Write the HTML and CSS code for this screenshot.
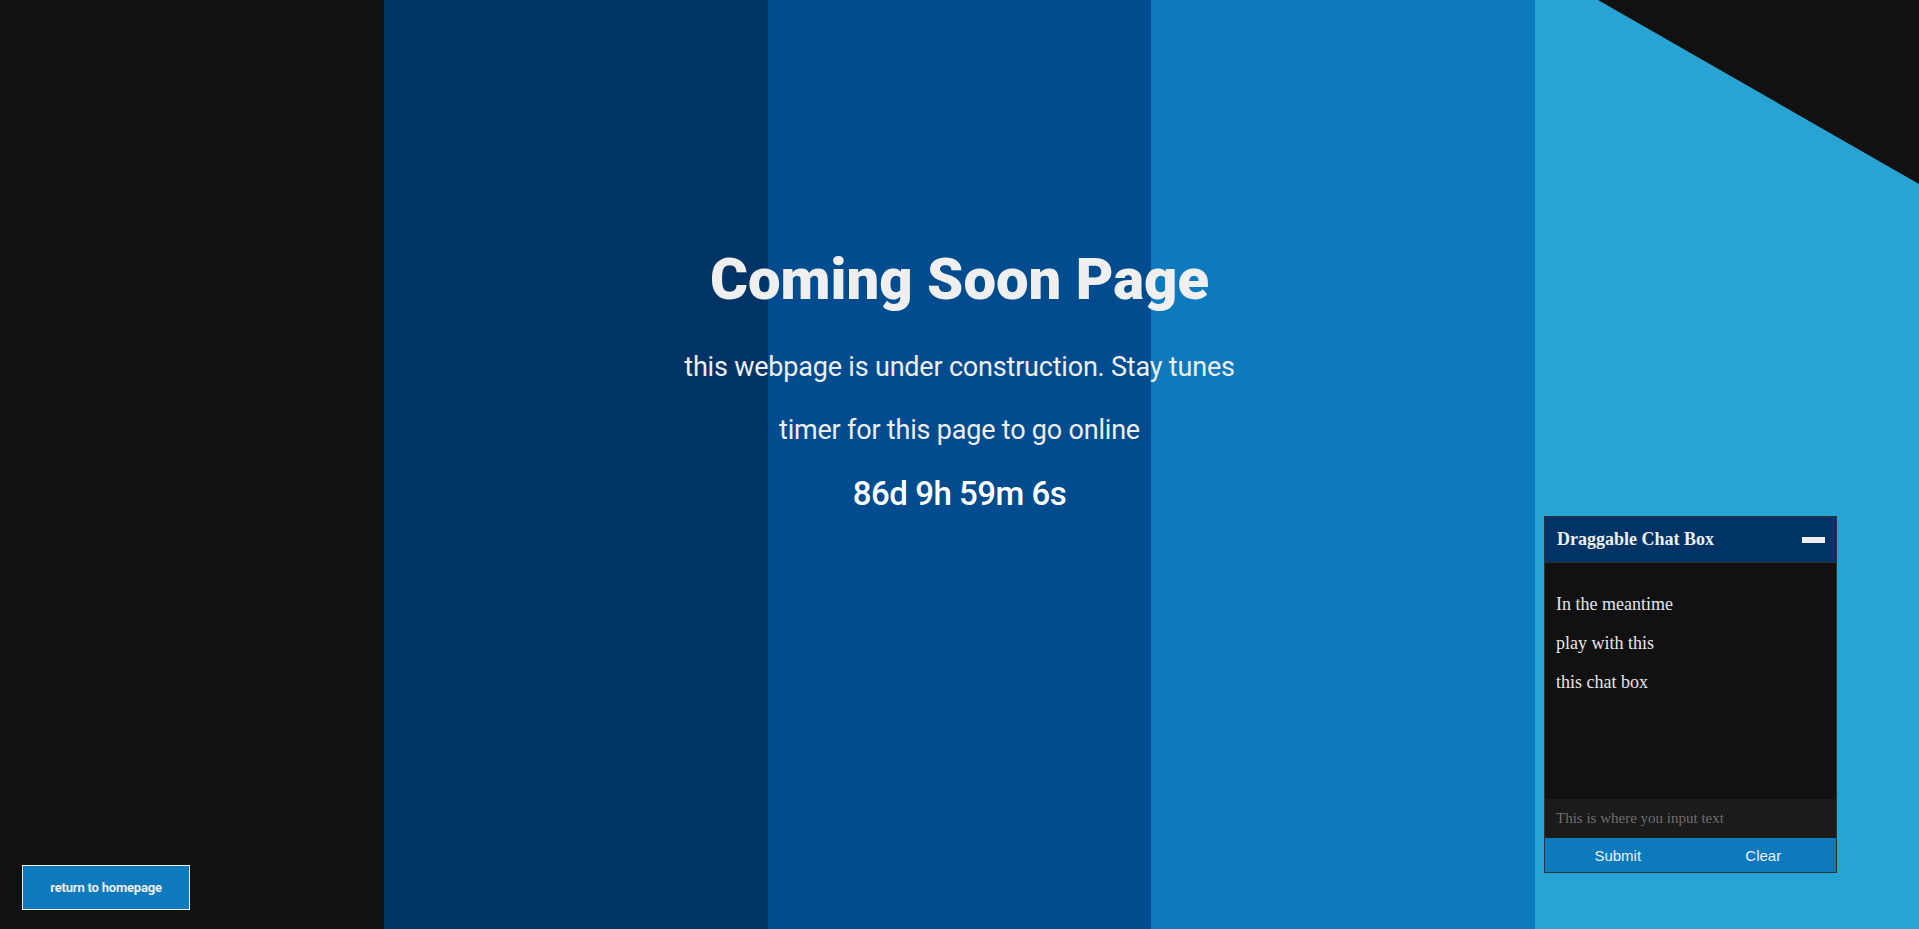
FILE: index.html
```html
<!DOCTYPE html>
<html lang="en">
<head>
<meta charset="utf-8">
<title>Coming Soon</title>
<link rel="stylesheet" href="styles.css">
</head>
<body>
<div class="page">
  <div class="stripes">
    <div class="stripe s1"></div>
    <div class="stripe s2"></div>
    <div class="stripe s3"></div>
    <div class="stripe s4"></div>
    <div class="stripe s5"></div>
  </div>
  <div class="corner"></div>
  <main class="content">
    <h1 class="title">Coming Soon Page</h1>
    <p class="lead">this webpage is under construction. Stay tunes</p>
    <p class="lead second">timer for this page to go online</p>
    <p class="timer">86d 9h 59m 6s</p>
  </main>
  <a class="home-btn" href="#">return to homepage</a>
  <section class="chat">
    <header class="chat-head">
      <span class="chat-title">Draggable Chat Box</span>
      <span class="chat-min"></span>
    </header>
    <div class="chat-body">
      <p>In the meantime</p>
      <p>play with this</p>
      <p>this chat box</p>
    </div>
    <input class="chat-input" type="text" placeholder="This is where you input text">
    <div class="chat-actions">
      <button class="chat-btn">Submit</button>
      <button class="chat-btn">Clear</button>
    </div>
  </section>
</div>
</body>
</html>
```
FILE: styles.css
```css
* { box-sizing: border-box; }
html, body { margin: 0; padding: 0; }
body { background: #111111; overflow: hidden; font-family: Roboto, "Liberation Sans", sans-serif; }
.page { position: relative; width: 1919px; height: 929px; }
.stripes { display: grid; grid-template-columns: repeat(5, 1fr); height: 100%; }
.s1 { background: #111111; }
.s2 { background: #003366; }
.s3 { background: #004c8e; }
.s4 { background: #0c7abc; }
.s5 { background: #27a4d3; }
.corner {
  position: absolute; top: 0; right: 0; width: 321px; height: 184px;
  background: #111111; clip-path: polygon(0 0, 100% 0, 100% 100%);
}
.content {
  position: absolute; top: 0; left: 0; right: 0;
  display: flex; flex-direction: column; align-items: center;
  color: #eeeeee;
}
.title {
  margin: 247px 0 0; font-family: Roboto, sans-serif; font-weight: 900;
  font-size: 58px; line-height: 64px; letter-spacing: 0; color: #efefef;
}
.lead { margin: 0; font-size: 27px; line-height: 32px; font-weight: 400; color: #eeeeee; letter-spacing: -0.2px; }
.title + .lead { margin-top: 40px; }
.lead.second { margin-top: 31px; }
.timer { margin: 29px 0 0; font-size: 33px; line-height: 38px; font-weight: 500; color: #ffffff; letter-spacing: -0.5px; }
.home-btn {
  position: absolute; left: 22px; top: 865px; width: 168px; height: 45px;
  display: flex; align-items: center; justify-content: center;
  background: #0c7abc; border: 1px solid #f0f0f0; color: #eeeeee;
  font-family: Roboto, sans-serif; font-weight: 700; font-size: 13px; text-decoration: none;
  letter-spacing: -0.2px;
}
.chat {
  position: absolute; left: 1544px; top: 516px; width: 293px; height: 357px;
  border: 1px solid #2e3338; background: #111111; display: flex; flex-direction: column;
  font-family: "Liberation Serif", serif;
}
.chat-head {
  height: 46px; flex: none; background: #003366; border-bottom: 1px solid #2e3338;
  display: flex; align-items: center; justify-content: space-between; padding: 0 12px 0 12px;
}
.chat-title { color: #eeeeee; font-weight: 700; font-size: 18px; }
.chat-min { width: 23px; height: 6px; background: #eeeeee; margin-right: -1px; }
.chat-body { flex: 1; padding: 30px 11px 0; color: #e6e6e6; font-size: 18px; }
.chat-body p { margin: 0 0 17px; line-height: 22px; }
.chat-input {
  height: 39px; flex: none; border: 0; background: #1b1b1b; padding: 0 11px; color: #eeeeee;
  font-family: "Liberation Serif", serif; font-size: 15px; outline: none; width: 100%;
}
.chat-input::placeholder { color: #6e6e6e; }
.chat-actions { display: grid; grid-template-columns: 1fr 1fr; height: 34px; flex: none; background: #0c7abc; }
.chat-btn {
  border: 0; background: transparent; color: #eeeeee; font-family: "Liberation Sans", Arial, sans-serif;
  font-size: 15px; cursor: pointer; padding: 0;
}
```
